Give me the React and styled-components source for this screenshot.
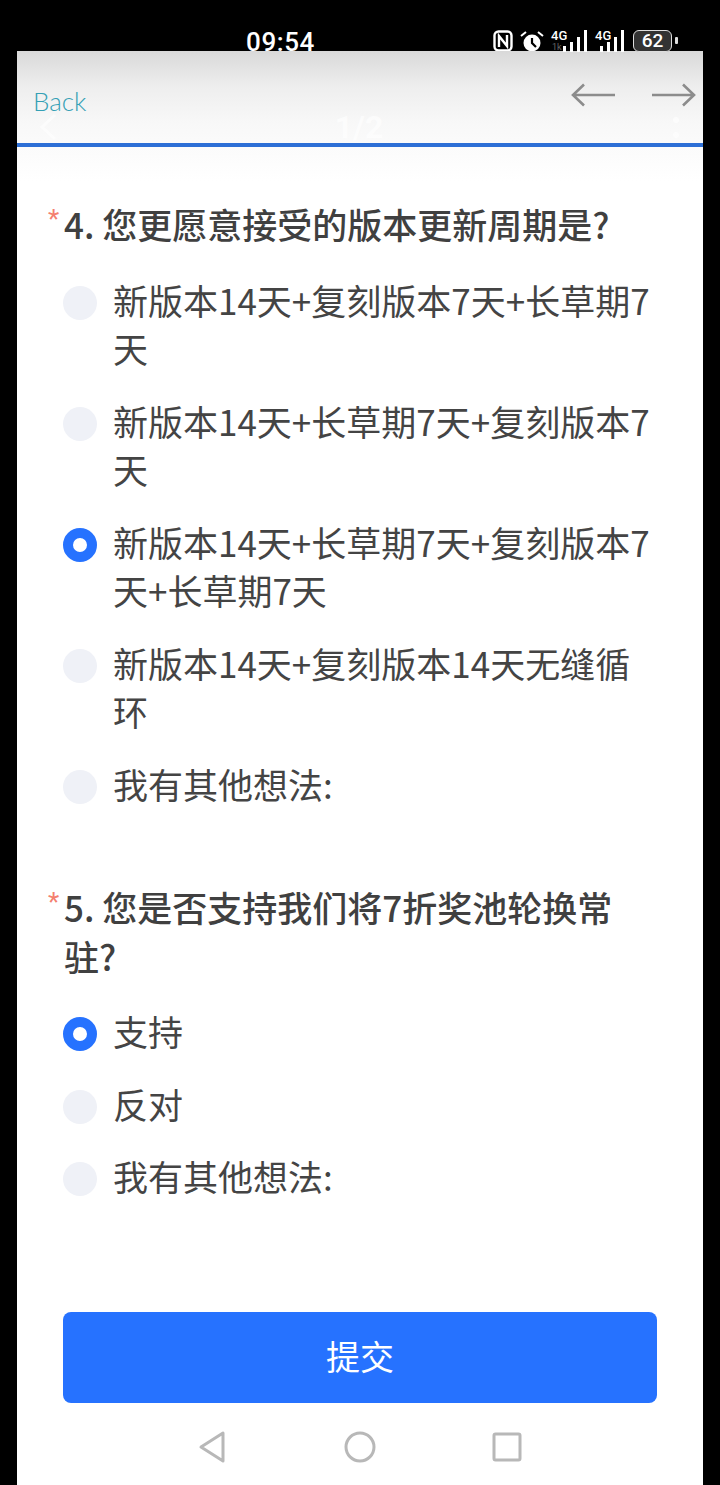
import styled, { createGlobalStyle } from 'styled-components';

const GlobalStyle = createGlobalStyle`
html, body {
  margin: 0;
  padding: 0;
  background: #000;
}
* { box-sizing: border-box; }
`;

const Screen = styled.div`
width: 720px;
height: 1485px;
background: #000;
display: flex;
flex-direction: column;
overflow: hidden;
font-family: "Noto Sans CJK SC", "Noto Sans", sans-serif;
`;

const StatusBar = styled.div`
height: 51px;
flex: none;
color: #fff;
display: flex;
align-items: flex-start;
padding: 30px 42px 0 246px;
justify-content: space-between;
`;
const Time = styled.span`
font-family: Roboto, sans-serif;
font-size: 26px;
font-weight: 500;
line-height: 24px;
letter-spacing: 0.6px;
`;
const StatusIcons = styled.div`
display: flex;
align-items: flex-start;
gap: 7px;
`;
const Net = styled.div`
display: flex;
align-items: flex-end;
height: 22px;
padding-left: ${(p) => p.$offset}px;
position: relative;
`;
const NetLabel = styled.span`
font-family: Roboto, sans-serif;
font-size: 13px;
font-weight: 500;
line-height: 12px;
position: absolute;
left: 0;
top: 0;
`;
const NetSub = styled.span`
font-family: Roboto, sans-serif;
font-size: 9px;
line-height: 9px;
color: #666;
position: absolute;
left: 1px;
bottom: 0;
`;
const Battery = styled.div`
width: 39px;
height: 22px;
margin: 0 6px 0 1px;
border: 1.5px solid #ddd;
border-radius: 6px;
background: #333;
color: #fff;
font-family: Roboto, sans-serif;
font-size: 19px;
font-weight: 500;
line-height: 20px;
text-align: center;
position: relative;
&::after {
  content: "";
  position: absolute;
  right: -7px;
  top: 6px;
  width: 3px;
  height: 7px;
  background: #ddd;
  border-radius: 1px;
}
`;

const Panel = styled.div`
flex: 1;
margin: 0 17px;
background: linear-gradient(#d9d9d9 0, #eeeeee 36px, #f8f8f8 72px, #fff 130px);
display: flex;
flex-direction: column;
`;

const Header = styled.header`
height: 96px;
flex: none;
position: relative;
border-bottom: 4px solid #2d6fd6;
display: flex;
justify-content: space-between;
align-items: flex-start;
padding: 25px 7px 0 16px;
`;
const Back = styled.span`
font-family: Lato, sans-serif;
font-size: 26px;
font-weight: 300;
line-height: 50px;
color: #35a0b5;
`;
const Arrows = styled.div`
display: flex;
gap: 37px;
padding-top: 7px;
color: #8c8c8c;
`;
const Faint = styled.div`
position: absolute;
left: 22px;
right: 24px;
top: 58px;
display: grid;
grid-template-columns: 1fr auto 1fr;
align-items: center;
color: #fff;
opacity: 0.65;
font-family: Roboto, sans-serif;
font-size: 32px;
font-weight: 700;
line-height: 36px;
`;
const Dots = styled.div`
display: flex;
flex-direction: column;
align-items: flex-end;
gap: 9px;
`;
const Dot = styled.i`
width: 6px;
height: 6px;
border-radius: 50%;
background: #fff;
`;

const Form = styled.main`
flex: 1;
display: flex;
flex-direction: column;
padding: 53px 46px 0;
`;
const Question = styled.section`
display: flex;
flex-direction: column;
gap: 27px;
margin-bottom: ${(p) => p.$after}px;
`;
const Title = styled.h2`
margin: 0 0 0 1px;
position: relative;
font-size: 35px;
font-weight: 500;
line-height: 48.5px;
color: #404040;
&::before {
  content: "*";
  position: absolute;
  left: -16px;
  top: -5px;
  font-family: Roboto, sans-serif;
  font-size: 26px;
  font-weight: 400;
  color: #f47f6f;
}
`;
const Options = styled.div`
display: flex;
flex-direction: column;
gap: 24px;
`;
const Option = styled.label`
display: flex;
gap: 16px;
font-size: 35px;
line-height: 48.5px;
color: #444;
`;
const Radio = styled.span`
flex: none;
width: 34px;
height: 34px;
margin-top: 10px;
border-radius: 50%;
background: ${(p) => (p.$checked ? '#fff' : '#eff1f7')};
border: ${(p) => (p.$checked ? '10px solid #2672ff' : 'none')};
`;
const Submit = styled.button`
width: 100%;
height: 91px;
flex: none;
border: none;
border-radius: 8px;
padding: 0 0 4px;
background: #2672ff;
color: #fff;
font-family: inherit;
font-size: 34px;
font-weight: 400;
`;
const NavBar = styled.nav`
flex: 1;
display: flex;
align-items: center;
justify-content: center;
gap: 115px;
padding-top: 6px;
color: #b8b8b8;
`;

const Arrow = ({ flip }) => (
    <svg width="44" height="24" viewBox="0 0 44 24" fill="none" stroke="currentColor" strokeWidth="2.6">
        {flip
            ? <path d="M0 12H42M31 1.5L42 12L31 22.5" />
            : <path d="M44 12H2M13 1.5L2 12L13 22.5" />}
    </svg>
);

const Signal = () => (
    <svg width="25" height="22" viewBox="0 0 25 22" fill="#fff">
        <rect x="0" y="16" width="3" height="6" />
        <rect x="7" y="12" width="3" height="10" />
        <rect x="14" y="7" width="3" height="15" />
        <rect x="21" y="0" width="3" height="22" />
    </svg>
);

const questionFour = [
    { text: '新版本14天+复刻版本7天+长草期7天' },
    { text: '新版本14天+长草期7天+复刻版本7天' },
    { text: '新版本14天+长草期7天+复刻版本7天+长草期7天', checked: true },
    { text: '新版本14天+复刻版本14天无缝循环' },
    { text: '我有其他想法:' },
];
const questionFive = [
    { text: '支持', checked: true },
    { text: '反对' },
    { text: '我有其他想法:' },
];

const OptionList = ({ items }) => (
    <Options>
        {items.map((item, i) => (
            <Option key={i}>
                <Radio $checked={item.checked} />
                <span>{item.text}</span>
            </Option>
        ))}
    </Options>
);

const App = () => {
    return (
        <Screen>
            <GlobalStyle />
            <StatusBar>
                <Time>09:54</Time>
                <StatusIcons>
                    <svg width="20" height="22" viewBox="0 0 20 22" fill="none" stroke="#fff" strokeWidth="2.4">
                        <rect x="1.5" y="1.5" width="17" height="19" rx="4" />
                        <path d="M6 17V6L14 16V5" />
                    </svg>
                    <svg width="24" height="22" viewBox="0 0 24 22" fill="#fff">
                        <circle cx="12" cy="13" r="8.5" />
                        <path d="M12 8V13L16 17" stroke="#000" strokeWidth="2.2" fill="none" />
                        <path d="M1 6L6 2M23 6L18 2" stroke="#fff" strokeWidth="2" />
                    </svg>
                    <Net $offset={12}>
                        <NetLabel>4G</NetLabel>
                        <NetSub>1k</NetSub>
                        <Signal />
                    </Net>
                    <Net $offset={5}>
                        <NetLabel>4G</NetLabel>
                        <Signal />
                    </Net>
                    <Battery>62</Battery>
                </StatusIcons>
            </StatusBar>
            <Panel>
                <Header>
                    <Back>Back</Back>
                    <Arrows>
                        <Arrow />
                        <Arrow flip />
                    </Arrows>
                    <Faint>
                        <svg width="18" height="28" viewBox="0 0 18 28" fill="none" stroke="#fff" strokeWidth="3">
                            <path d="M16 2L3 14L16 26" />
                        </svg>
                        <span>1/2</span>
                        <Dots>
                            <Dot />
                            <Dot />
                        </Dots>
                    </Faint>
                </Header>
                <Form>
                    <Question $after={75}>
                        <Title>4. 您更愿意接受的版本更新周期是?</Title>
                        <OptionList items={questionFour} />
                    </Question>
                    <Question $after={111}>
                        <Title>5. 您是否支持我们将7折奖池轮换常驻?</Title>
                        <OptionList items={questionFive} />
                    </Question>
                    <Submit>提交</Submit>
                    <NavBar>
                        <svg width="32" height="34" viewBox="0 0 32 34" fill="none" stroke="currentColor" strokeWidth="3" strokeLinejoin="round">
                            <path d="M26 3V31L4 17Z" />
                        </svg>
                        <svg width="32" height="34" viewBox="0 0 32 34" fill="none" stroke="currentColor" strokeWidth="3">
                            <circle cx="16" cy="17" r="14" />
                        </svg>
                        <svg width="32" height="34" viewBox="0 0 32 34" fill="none" stroke="currentColor" strokeWidth="3" strokeLinejoin="round">
                            <rect x="3" y="4" width="26" height="26" rx="1.5" />
                        </svg>
                    </NavBar>
                </Form>
            </Panel>
        </Screen>
    );
};

export default App;
